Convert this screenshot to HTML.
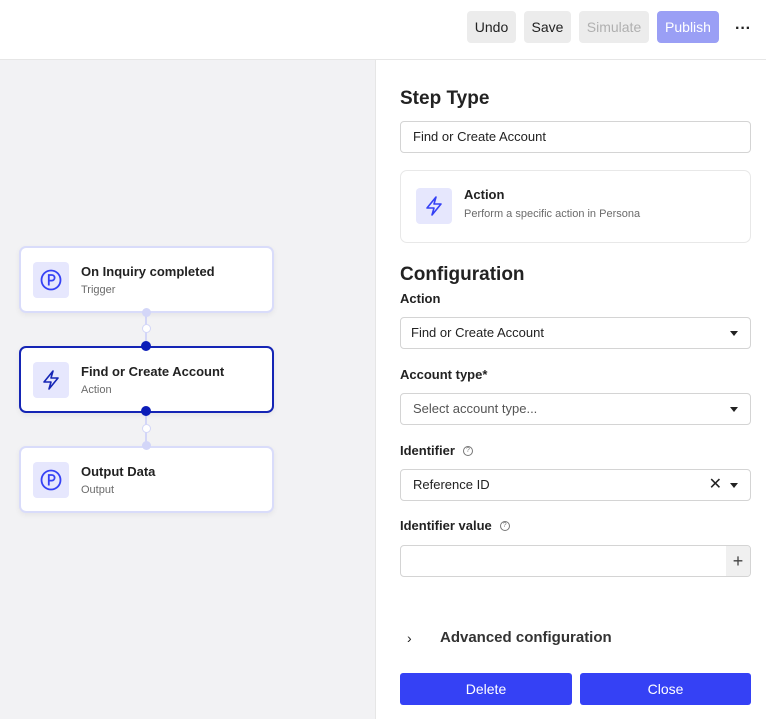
<!DOCTYPE html>
<html><head><style>
*{box-sizing:border-box;margin:0;padding:0}
body{width:766px;height:719px;overflow:hidden;font-family:"Liberation Sans",sans-serif;background:#fff;position:relative;color:#222}
.a{position:absolute}
.btn{position:absolute;top:11px;height:32px;border-radius:4px;background:#ececec;font-size:14px;line-height:32px;text-align:center;color:#222}
.node{position:absolute;left:19px;width:255px;height:67px;background:#fff;border:2px solid #d9dcfa;border-radius:7px;box-shadow:0 2px 6px rgba(0,0,0,.06)}
.ib{position:absolute;left:12px;top:14px;width:36px;height:36px;background:#e6e7fd;border-radius:4px}
.nt{position:absolute;left:60px;top:16px;font-size:13px;font-weight:bold;color:#222}
.ns{position:absolute;left:60px;top:36px;font-size:11px;color:#6b6b6b}
.dot{position:absolute;border-radius:50%}
.inp{position:absolute;left:400px;width:351px;height:32px;border:1px solid #d4d4d4;border-radius:4px;font-size:13px;line-height:30px;padding-left:12px;color:#222}
.lbl{position:absolute;left:400px;font-size:13px;font-weight:bold;color:#222}
.caret{position:absolute;right:12px;top:13px;width:0;height:0;border-left:4px solid transparent;border-right:4px solid transparent;border-top:5px solid #222}
.q{display:inline-block;width:10px;height:10px;border:1px solid #777;border-radius:50%;font-size:7px;line-height:8px;text-align:center;font-weight:normal;color:#777;margin-left:8px;vertical-align:3px}
</style></head><body>
<div class="a" style="left:0;top:59px;width:766px;height:1px;background:#e6e6e6"></div>
<div class="a" style="left:0;top:60px;width:375px;height:659px;background:#f2f2f4"></div>
<div class="a" style="left:375px;top:60px;width:1px;height:659px;background:#e6e6e6"></div>
<div class="btn" style="left:467px;width:49px">Undo</div>
<div class="btn" style="left:524px;width:47px">Save</div>
<div class="btn" style="left:579px;width:70px;color:#b0b0b0">Simulate</div>
<div class="btn" style="left:657px;width:62px;background:#9a9ff5;color:#fff">Publish</div>
<div class="a" style="left:735px;top:20px;font-size:16px;font-weight:bold">···</div>

<div class="a" style="left:145px;top:312px;width:2px;height:100px;background:#d3d6f8"></div>
<div class="a" style="left:145px;top:412px;width:2px;height:36px;background:#d3d6f8"></div>
<div class="node" style="top:246px"><div class="ib"><svg width="36" height="36" viewBox="0 0 36 36"><circle cx="18" cy="18" r="9.5" fill="none" stroke="#3541f5" stroke-width="1.8"/><path d="M15.8 23.5V13h3a2.8 2.8 0 0 1 0 5.6h-3" fill="none" stroke="#3541f5" stroke-width="1.8"/></svg></div><div class="nt">On Inquiry completed</div><div class="ns">Trigger</div></div>
<div class="node" style="top:346px;border-color:#1525b5"><div class="ib"><svg width="36" height="36" viewBox="0 0 36 36"><path d="M20 9l-9 11h7l-2 7 9-11h-7z" fill="none" stroke="#1525b5" stroke-width="1.6" stroke-linejoin="round"/></svg></div><div class="nt">Find or Create Account</div><div class="ns">Action</div></div>
<div class="node" style="top:446px"><div class="ib"><svg width="36" height="36" viewBox="0 0 36 36"><circle cx="18" cy="18" r="9.5" fill="none" stroke="#3541f5" stroke-width="1.8"/><path d="M15.8 23.5V13h3a2.8 2.8 0 0 1 0 5.6h-3" fill="none" stroke="#3541f5" stroke-width="1.8"/></svg></div><div class="nt">Output Data</div><div class="ns">Output</div></div>
<div class="dot" style="left:142px;top:308px;width:9px;height:9px;background:#d3d6f8"></div>
<div class="dot" style="left:142px;top:324px;width:9px;height:9px;background:#fff;border:1.5px solid #d3d6f8"></div>
<div class="dot" style="left:141px;top:341px;width:10px;height:10px;background:#0b1cb8"></div>
<div class="dot" style="left:141px;top:406px;width:10px;height:10px;background:#0b1cb8"></div>
<div class="dot" style="left:142px;top:424px;width:9px;height:9px;background:#fff;border:1.5px solid #d3d6f8"></div>
<div class="dot" style="left:142px;top:441px;width:9px;height:9px;background:#d3d6f8"></div>

<div class="a" style="left:400px;top:88px;font-size:19px;font-weight:bold;color:#222">Step Type</div>
<div class="inp" style="top:121px">Find or Create Account</div>
<div class="a" style="left:400px;top:170px;width:351px;height:73px;border:1px solid #e8e8e8;border-radius:7px"></div>
<div class="a" style="left:416px;top:188px;width:36px;height:36px;background:#e6e7fd;border-radius:4px"><svg width="36" height="36" viewBox="0 0 36 36"><path d="M20 9l-9 11h7l-2 7 9-11h-7z" fill="none" stroke="#3541f5" stroke-width="1.6" stroke-linejoin="round"/></svg></div>
<div class="a" style="left:464px;top:187px;font-size:13px;font-weight:bold">Action</div>
<div class="a" style="left:464px;top:208px;font-size:11px;color:#6b6b6b">Perform a specific action in Persona</div>
<div class="a" style="left:400px;top:264px;font-size:19px;font-weight:bold;color:#222">Configuration</div>
<div class="lbl" style="top:291px">Action</div>
<div class="inp" style="top:317px;padding-left:10px">Find or Create Account<div class="caret"></div></div>
<div class="lbl" style="top:367px">Account type*</div>
<div class="inp" style="top:393px;color:#555">Select account type...<div class="caret"></div></div>
<div class="lbl" style="top:443px">Identifier<span class="q">?</span></div>
<div class="inp" style="top:469px">Reference ID<div class="a" style="right:28px;top:0;font-size:16px">✕</div><div class="caret"></div></div>
<div class="lbl" style="top:518px">Identifier value<span class="q">?</span></div>
<div class="inp" style="top:545px;overflow:hidden"><div class="a" style="right:0;top:0;width:24px;height:30px;background:#f0f0f0;text-align:center;font-size:18px;line-height:30px;color:#444">+</div></div>
<div class="a" style="left:407px;top:630px;font-size:14px">›</div>
<div class="a" style="left:440px;top:629px;font-size:15px;font-weight:bold;color:#333">Advanced configuration</div>
<div class="a" style="left:400px;top:673px;width:172px;height:32px;background:#3541f5;border-radius:3px;color:#fff;font-size:14px;text-align:center;line-height:32px">Delete</div>
<div class="a" style="left:580px;top:673px;width:171px;height:32px;background:#3541f5;border-radius:3px;color:#fff;font-size:14px;text-align:center;line-height:32px">Close</div>
</body></html>
